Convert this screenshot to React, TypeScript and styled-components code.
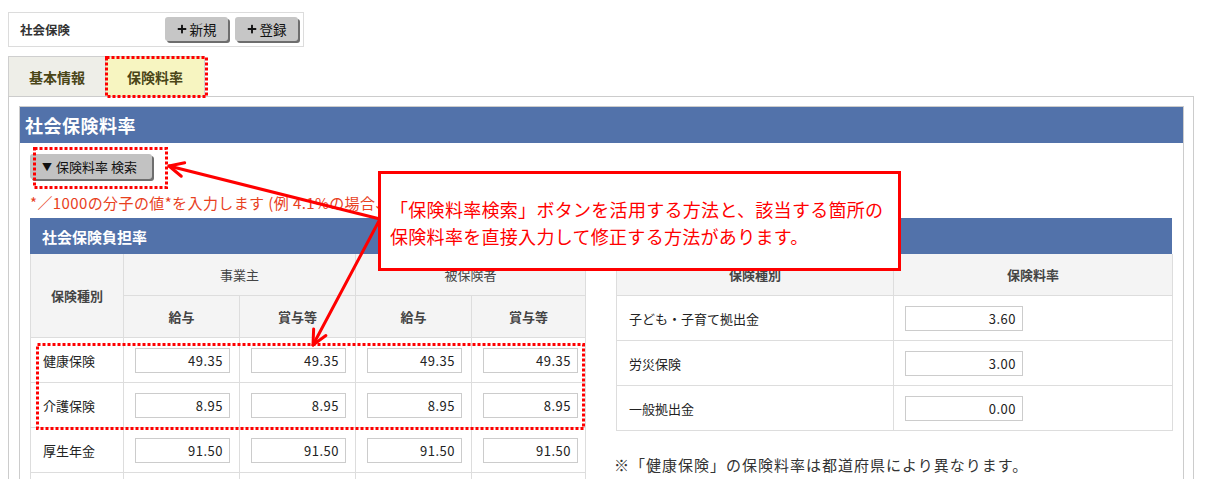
import styled, { createGlobalStyle } from "styled-components";
import { FaPlus } from "react-icons/fa";

const GlobalStyle = createGlobalStyle`
  html, body {
    margin: 0;
    padding: 0;
    overflow: hidden;
    background: #ffffff;
  }
  body {
    font-family: "Noto Sans CJK JP", "Noto Sans", sans-serif;
    color: #222;
  }
`;

const leftRows = [
  { name: "健康保険", values: ["49.35", "49.35", "49.35", "49.35"] },
  { name: "介護保険", values: ["8.95", "8.95", "8.95", "8.95"] },
  { name: "厚生年金", values: ["91.50", "91.50", "91.50", "91.50"] },
];

const rightRows = [
  { name: "子ども・子育て拠出金", value: "3.60" },
  { name: "労災保険", value: "3.00" },
  { name: "一般拠出金", value: "0.00" },
];

// arrow with an open V head at (x2, y2)
const arrowHead = (x1: number, y1: number, x2: number, y2: number) => {
  const len = 16;
  const a = Math.atan2(y1 - y2, x1 - x2);
  const w = Math.PI / 7;
  const p1 = [x2 + len * Math.cos(a + w), y2 + len * Math.sin(a + w)];
  const p2 = [x2 + len * Math.cos(a - w), y2 + len * Math.sin(a - w)];
  return `M${p1[0]},${p1[1]} L${x2},${y2} L${p2[0]},${p2[1]}`;
};

const App = () => {
  return (
    <>
      <GlobalStyle />
      <Page>
        <Toolbar>
          <ToolbarTitle>社会保険</ToolbarTitle>
          <GrayButton>
            <FaPlus size={10} /> 新規
          </GrayButton>
          <GrayButton>
            <FaPlus size={10} /> 登録
          </GrayButton>
        </Toolbar>

        <Tabs>
          <Tab>基本情報</Tab>
          <Tab $active>保険料率</Tab>
        </Tabs>

        <Panel>
          <Section>
            <SectionHeader>社会保険料率</SectionHeader>
            <SectionBody>
              <SearchButton>
                <span>▼</span> 保険料率 検索
              </SearchButton>
              <Hint>*／1000の分子の値*を入力します (例 4.1%の場合、41と入力)</Hint>
              <SubHeader>社会保険負担率</SubHeader>
              <Tables>
                <LeftTable>
                  <colgroup>
                    <col style={{ width: 93 }} />
                    <col style={{ width: 116 }} />
                    <col style={{ width: 116 }} />
                    <col style={{ width: 116 }} />
                    <col style={{ width: 114 }} />
                  </colgroup>
                  <thead>
                    <tr>
                      <Th rowSpan={2}>保険種別</Th>
                      <Th colSpan={2} $normal>
                        事業主
                      </Th>
                      <Th colSpan={2} $normal>
                        被保険者
                      </Th>
                    </tr>
                    <tr>
                      <Th>給与</Th>
                      <Th>賞与等</Th>
                      <Th>給与</Th>
                      <Th>賞与等</Th>
                    </tr>
                  </thead>
                  <tbody>
                    {leftRows.map((row) => (
                      <tr key={row.name}>
                        <LabelCell>{row.name}</LabelCell>
                        {row.values.map((v, i) => (
                          <InputCell key={i}>
                            <RateInput value={v} readOnly $width={95} />
                          </InputCell>
                        ))}
                      </tr>
                    ))}
                    <tr>
                      <LabelCell />
                      <InputCell />
                      <InputCell />
                      <InputCell />
                      <InputCell />
                    </tr>
                  </tbody>
                </LeftTable>

                <RightColumn>
                  <RightTable>
                    <colgroup>
                      <col style={{ width: 277 }} />
                      <col style={{ width: 279 }} />
                    </colgroup>
                    <thead>
                      <tr>
                        <Th>保険種別</Th>
                        <Th>保険料率</Th>
                      </tr>
                    </thead>
                    <tbody>
                      {rightRows.map((row) => (
                        <tr key={row.name}>
                          <LabelCell>{row.name}</LabelCell>
                          <InputCell>
                            <RateInput value={row.value} readOnly $width={118} />
                          </InputCell>
                        </tr>
                      ))}
                    </tbody>
                  </RightTable>
                  <Note>※「健康保険」の保険料率は都道府県により異なります。</Note>
                </RightColumn>
              </Tables>
            </SectionBody>
          </Section>
        </Panel>

        <Marks width="1207" height="479" viewBox="0 0 1207 479">
          <DotRect x="106.5" y="57.5" width="100" height="39" />
          <DotRect x="34.5" y="148.5" width="132" height="39" />
          <DotRect x="37.5" y="344.5" width="546" height="84" />
          <ArrowLine d="M380,219 L169,166" />
          <ArrowLine d={arrowHead(380, 219, 169, 166)} />
          <ArrowLine d="M380,219 L313,345" />
          <ArrowLine d={arrowHead(380, 219, 313, 345)} />
        </Marks>

        <Callout>
          <p>「保険料率検索」ボタンを活用する方法と、該当する箇所の</p>
          <p>保険料率を直接入力して修正する方法があります。</p>
        </Callout>
      </Page>
    </>
  );
};

export default App;

const Page = styled.div`
  position: relative;
  width: 1207px;
  height: 479px;
  overflow: hidden;
  padding: 12px 0 0 8px;
  box-sizing: border-box;
`;

const Toolbar = styled.div`
  display: flex;
  align-items: center;
  gap: 7px;
  width: 296px;
  height: 35px;
  box-sizing: border-box;
  border: 1px solid #dcdcdc;
  padding: 0 5px 0 11px;
`;

const ToolbarTitle = styled.div`
  flex: 1;
  font-size: 12.5px;
  font-weight: bold;
  color: #333;
`;

const GrayButton = styled.div`
  display: flex;
  align-items: center;
  justify-content: center;
  gap: 3px;
  width: 63px;
  height: 24px;
  margin-bottom: 2px;
  background: #c6c6c6;
  border-radius: 3px;
  box-shadow: 2px 2px 0 #6e6e6e;
  font-size: 13.5px;
  color: #111;
`;

const Tabs = styled.div`
  display: flex;
  margin-top: 9px;
`;

const Tab = styled.div<{ $active?: boolean }>`
  display: flex;
  align-items: center;
  justify-content: center;
  width: ${(p) => (p.$active ? "99px" : "98px")};
  height: 40px;
  box-sizing: border-box;
  border: 1px solid #cfcfcf;
  border-bottom: none;
  border-left: ${(p) => (p.$active ? "none" : "1px solid #cfcfcf")};
  background: ${(p) => (p.$active ? "#f7f5c1" : "#eeeee8")};
  font-size: 14px;
  font-weight: bold;
  color: #4a4517;
`;

const Panel = styled.div`
  width: 1186px;
  box-sizing: border-box;
  border: 1px solid #cccccc;
  padding: 9px 9px 0 10px;
`;

const Section = styled.div`
  border: 1px solid #cccccc;
  border-bottom: none;
`;

const SectionHeader = styled.div`
  height: 36px;
  display: flex;
  align-items: center;
  padding-left: 5px;
  background: #5272aa;
  color: #fff;
  font-size: 18px;
  font-weight: bold;
  letter-spacing: 0.5px;
`;

const SectionBody = styled.div`
  padding: 11px 11px 0 10px;
`;

const SearchButton = styled.div`
  display: flex;
  align-items: center;
  gap: 4px;
  width: 122px;
  height: 25px;
  box-sizing: border-box;
  padding-left: 12px;
  background: #c2c2c2;
  border-radius: 3px;
  box-shadow: 2px 2px 0 #6e6e6e;
  font-size: 13px;
  color: #111;

  span {
    font-size: 10px;
  }
`;

const Hint = styled.div`
  margin-top: 14px;
  height: 20px;
  line-height: 20px;
  font-size: 15px;
  letter-spacing: 0.4px;
  color: #e8411e;
  white-space: nowrap;
`;

const SubHeader = styled.div`
  margin-top: 5px;
  height: 36px;
  display: flex;
  align-items: center;
  padding-left: 12px;
  background: #5272aa;
  color: #fff;
  font-size: 15px;
  font-weight: bold;
`;

const Tables = styled.div`
  display: flex;
  justify-content: space-between;
  align-items: flex-start;
`;

const LeftTable = styled.table`
  width: 555px;
  table-layout: fixed;
  border-collapse: collapse;
`;

const RightColumn = styled.div`
  width: 556px;
`;

const RightTable = styled.table`
  width: 556px;
  table-layout: fixed;
  border-collapse: collapse;
`;

const Th = styled.th<{ $normal?: boolean }>`
  height: 41px;
  padding: 0;
  background: #f4f4f4;
  border: 1px solid #dddddd;
  border-top: none;
  font-size: 13px;
  font-weight: ${(p) => (p.$normal ? "normal" : "bold")};
  color: #444;
  text-align: center;
`;

const LabelCell = styled.td`
  height: 44px;
  padding: 0 0 0 12px;
  border: 1px solid #dddddd;
  font-size: 13px;
  color: #222;
  white-space: nowrap;
`;

const InputCell = styled.td`
  height: 44px;
  padding: 0 0 0 11px;
  border: 1px solid #dddddd;
`;

const RateInput = styled.input<{ $width: number }>`
  display: block;
  width: ${(p) => p.$width}px;
  height: 25px;
  box-sizing: border-box;
  border: 1px solid #cccccc;
  padding: 0 6px 0 0;
  text-align: right;
  font-family: "Noto Sans CJK JP", sans-serif;
  font-size: 13px;
  letter-spacing: 0.5px;
  color: #222;
  background: #fff;
  outline: none;
`;

const Note = styled.div`
  margin-top: 23px;
  margin-left: -2px;
  font-size: 15px;
  letter-spacing: 1px;
  color: #333;
  white-space: nowrap;
`;

const Marks = styled.svg`
  position: absolute;
  left: 0;
  top: 0;
  pointer-events: none;
`;

const DotRect = styled.rect`
  fill: none;
  stroke: #ff0000;
  stroke-width: 3;
  stroke-dasharray: 3 2;
`;

const ArrowLine = styled.path`
  fill: none;
  stroke: #ff0000;
  stroke-width: 3;
  stroke-linecap: round;
  stroke-linejoin: round;
`;

const Callout = styled.div`
  position: absolute;
  left: 378px;
  top: 171px;
  width: 523px;
  height: 100px;
  box-sizing: border-box;
  border: 3px solid #ff0000;
  background: #fff;
  display: flex;
  flex-direction: column;
  justify-content: center;
  padding: 4px 0 0 9px;
  color: #ff0000;
  font-size: 18px;
  letter-spacing: 0.3px;
  line-height: 27px;

  p {
    margin: 0;
    white-space: nowrap;
  }
`;
